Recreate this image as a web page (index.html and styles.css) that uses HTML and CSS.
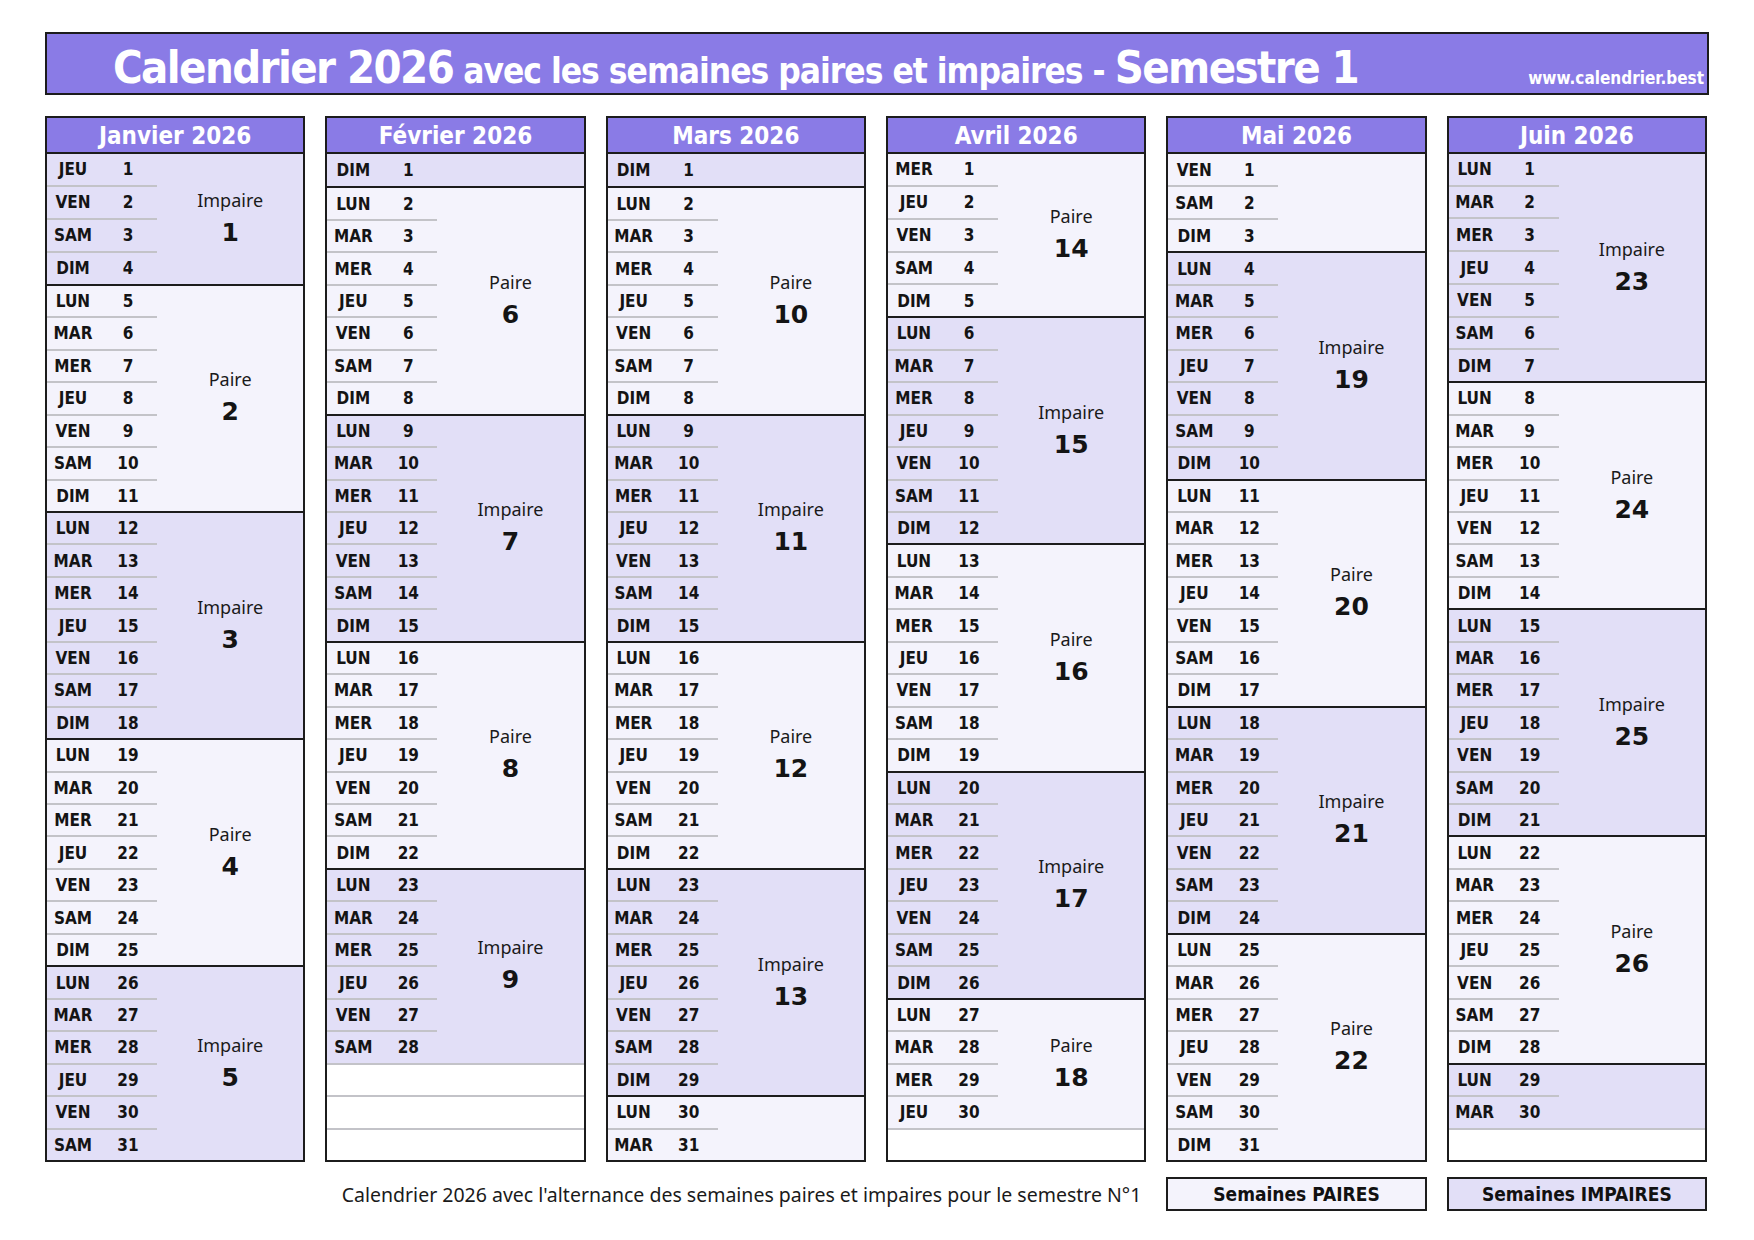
FILE: index.html
```html
<!DOCTYPE html>
<html lang="fr">
<head>
<meta charset="utf-8">
<title>Calendrier 2026 - Semestre 1</title>
<link rel="stylesheet" href="styles.css">
</head>
<body>
<div class="page">
  <header class="banner">
    <h1 class="title"><span class="big">Calendrier 2026</span> <span class="small">avec les semaines paires et impaires -</span> <span class="big">Semestre 1</span></h1>
    <div class="site">www.calendrier.best</div>
  </header>

  <div class="months">
    <!-- Janvier -->
    <section class="month">
      <h2 class="mh">Janvier 2026</h2>
      <div class="wb odd r4">
        <div class="days">
          <div class="d"><span class="dn">JEU</span><span class="dd">1</span></div>
          <div class="d"><span class="dn">VEN</span><span class="dd">2</span></div>
          <div class="d"><span class="dn">SAM</span><span class="dd">3</span></div>
          <div class="d"><span class="dn">DIM</span><span class="dd">4</span></div>
        </div>
        <div class="wk"><span class="wl">Impaire</span><span class="wn">1</span></div>
      </div>
      <div class="wb even r7">
        <div class="days">
          <div class="d"><span class="dn">LUN</span><span class="dd">5</span></div>
          <div class="d"><span class="dn">MAR</span><span class="dd">6</span></div>
          <div class="d"><span class="dn">MER</span><span class="dd">7</span></div>
          <div class="d"><span class="dn">JEU</span><span class="dd">8</span></div>
          <div class="d"><span class="dn">VEN</span><span class="dd">9</span></div>
          <div class="d"><span class="dn">SAM</span><span class="dd">10</span></div>
          <div class="d"><span class="dn">DIM</span><span class="dd">11</span></div>
        </div>
        <div class="wk"><span class="wl">Paire</span><span class="wn">2</span></div>
      </div>
      <div class="wb odd r7">
        <div class="days">
          <div class="d"><span class="dn">LUN</span><span class="dd">12</span></div>
          <div class="d"><span class="dn">MAR</span><span class="dd">13</span></div>
          <div class="d"><span class="dn">MER</span><span class="dd">14</span></div>
          <div class="d"><span class="dn">JEU</span><span class="dd">15</span></div>
          <div class="d"><span class="dn">VEN</span><span class="dd">16</span></div>
          <div class="d"><span class="dn">SAM</span><span class="dd">17</span></div>
          <div class="d"><span class="dn">DIM</span><span class="dd">18</span></div>
        </div>
        <div class="wk"><span class="wl">Impaire</span><span class="wn">3</span></div>
      </div>
      <div class="wb even r7">
        <div class="days">
          <div class="d"><span class="dn">LUN</span><span class="dd">19</span></div>
          <div class="d"><span class="dn">MAR</span><span class="dd">20</span></div>
          <div class="d"><span class="dn">MER</span><span class="dd">21</span></div>
          <div class="d"><span class="dn">JEU</span><span class="dd">22</span></div>
          <div class="d"><span class="dn">VEN</span><span class="dd">23</span></div>
          <div class="d"><span class="dn">SAM</span><span class="dd">24</span></div>
          <div class="d"><span class="dn">DIM</span><span class="dd">25</span></div>
        </div>
        <div class="wk"><span class="wl">Paire</span><span class="wn">4</span></div>
      </div>
      <div class="wb odd r6">
        <div class="days">
          <div class="d"><span class="dn">LUN</span><span class="dd">26</span></div>
          <div class="d"><span class="dn">MAR</span><span class="dd">27</span></div>
          <div class="d"><span class="dn">MER</span><span class="dd">28</span></div>
          <div class="d"><span class="dn">JEU</span><span class="dd">29</span></div>
          <div class="d"><span class="dn">VEN</span><span class="dd">30</span></div>
          <div class="d"><span class="dn">SAM</span><span class="dd">31</span></div>
        </div>
        <div class="wk"><span class="wl">Impaire</span><span class="wn">5</span></div>
      </div>
    </section>

    <!-- Février -->
    <section class="month">
      <h2 class="mh">Février 2026</h2>
      <div class="wb odd r1">
        <div class="days">
          <div class="d"><span class="dn">DIM</span><span class="dd">1</span></div>
        </div>
        <div class="wk"></div>
      </div>
      <div class="wb even r7">
        <div class="days">
          <div class="d"><span class="dn">LUN</span><span class="dd">2</span></div>
          <div class="d"><span class="dn">MAR</span><span class="dd">3</span></div>
          <div class="d"><span class="dn">MER</span><span class="dd">4</span></div>
          <div class="d"><span class="dn">JEU</span><span class="dd">5</span></div>
          <div class="d"><span class="dn">VEN</span><span class="dd">6</span></div>
          <div class="d"><span class="dn">SAM</span><span class="dd">7</span></div>
          <div class="d"><span class="dn">DIM</span><span class="dd">8</span></div>
        </div>
        <div class="wk"><span class="wl">Paire</span><span class="wn">6</span></div>
      </div>
      <div class="wb odd r7">
        <div class="days">
          <div class="d"><span class="dn">LUN</span><span class="dd">9</span></div>
          <div class="d"><span class="dn">MAR</span><span class="dd">10</span></div>
          <div class="d"><span class="dn">MER</span><span class="dd">11</span></div>
          <div class="d"><span class="dn">JEU</span><span class="dd">12</span></div>
          <div class="d"><span class="dn">VEN</span><span class="dd">13</span></div>
          <div class="d"><span class="dn">SAM</span><span class="dd">14</span></div>
          <div class="d"><span class="dn">DIM</span><span class="dd">15</span></div>
        </div>
        <div class="wk"><span class="wl">Impaire</span><span class="wn">7</span></div>
      </div>
      <div class="wb even r7">
        <div class="days">
          <div class="d"><span class="dn">LUN</span><span class="dd">16</span></div>
          <div class="d"><span class="dn">MAR</span><span class="dd">17</span></div>
          <div class="d"><span class="dn">MER</span><span class="dd">18</span></div>
          <div class="d"><span class="dn">JEU</span><span class="dd">19</span></div>
          <div class="d"><span class="dn">VEN</span><span class="dd">20</span></div>
          <div class="d"><span class="dn">SAM</span><span class="dd">21</span></div>
          <div class="d"><span class="dn">DIM</span><span class="dd">22</span></div>
        </div>
        <div class="wk"><span class="wl">Paire</span><span class="wn">8</span></div>
      </div>
      <div class="wb odd r6">
        <div class="days">
          <div class="d"><span class="dn">LUN</span><span class="dd">23</span></div>
          <div class="d"><span class="dn">MAR</span><span class="dd">24</span></div>
          <div class="d"><span class="dn">MER</span><span class="dd">25</span></div>
          <div class="d"><span class="dn">JEU</span><span class="dd">26</span></div>
          <div class="d"><span class="dn">VEN</span><span class="dd">27</span></div>
          <div class="d"><span class="dn">SAM</span><span class="dd">28</span></div>
        </div>
        <div class="wk"><span class="wl">Impaire</span><span class="wn">9</span></div>
      </div>
      <div class="empty"></div>
      <div class="empty"></div>
      <div class="empty"></div>
    </section>

    <!-- Mars -->
    <section class="month">
      <h2 class="mh">Mars 2026</h2>
      <div class="wb odd r1">
        <div class="days">
          <div class="d"><span class="dn">DIM</span><span class="dd">1</span></div>
        </div>
        <div class="wk"></div>
      </div>
      <div class="wb even r7">
        <div class="days">
          <div class="d"><span class="dn">LUN</span><span class="dd">2</span></div>
          <div class="d"><span class="dn">MAR</span><span class="dd">3</span></div>
          <div class="d"><span class="dn">MER</span><span class="dd">4</span></div>
          <div class="d"><span class="dn">JEU</span><span class="dd">5</span></div>
          <div class="d"><span class="dn">VEN</span><span class="dd">6</span></div>
          <div class="d"><span class="dn">SAM</span><span class="dd">7</span></div>
          <div class="d"><span class="dn">DIM</span><span class="dd">8</span></div>
        </div>
        <div class="wk"><span class="wl">Paire</span><span class="wn">10</span></div>
      </div>
      <div class="wb odd r7">
        <div class="days">
          <div class="d"><span class="dn">LUN</span><span class="dd">9</span></div>
          <div class="d"><span class="dn">MAR</span><span class="dd">10</span></div>
          <div class="d"><span class="dn">MER</span><span class="dd">11</span></div>
          <div class="d"><span class="dn">JEU</span><span class="dd">12</span></div>
          <div class="d"><span class="dn">VEN</span><span class="dd">13</span></div>
          <div class="d"><span class="dn">SAM</span><span class="dd">14</span></div>
          <div class="d"><span class="dn">DIM</span><span class="dd">15</span></div>
        </div>
        <div class="wk"><span class="wl">Impaire</span><span class="wn">11</span></div>
      </div>
      <div class="wb even r7">
        <div class="days">
          <div class="d"><span class="dn">LUN</span><span class="dd">16</span></div>
          <div class="d"><span class="dn">MAR</span><span class="dd">17</span></div>
          <div class="d"><span class="dn">MER</span><span class="dd">18</span></div>
          <div class="d"><span class="dn">JEU</span><span class="dd">19</span></div>
          <div class="d"><span class="dn">VEN</span><span class="dd">20</span></div>
          <div class="d"><span class="dn">SAM</span><span class="dd">21</span></div>
          <div class="d"><span class="dn">DIM</span><span class="dd">22</span></div>
        </div>
        <div class="wk"><span class="wl">Paire</span><span class="wn">12</span></div>
      </div>
      <div class="wb odd r7">
        <div class="days">
          <div class="d"><span class="dn">LUN</span><span class="dd">23</span></div>
          <div class="d"><span class="dn">MAR</span><span class="dd">24</span></div>
          <div class="d"><span class="dn">MER</span><span class="dd">25</span></div>
          <div class="d"><span class="dn">JEU</span><span class="dd">26</span></div>
          <div class="d"><span class="dn">VEN</span><span class="dd">27</span></div>
          <div class="d"><span class="dn">SAM</span><span class="dd">28</span></div>
          <div class="d"><span class="dn">DIM</span><span class="dd">29</span></div>
        </div>
        <div class="wk"><span class="wl">Impaire</span><span class="wn">13</span></div>
      </div>
      <div class="wb even r2">
        <div class="days">
          <div class="d"><span class="dn">LUN</span><span class="dd">30</span></div>
          <div class="d"><span class="dn">MAR</span><span class="dd">31</span></div>
        </div>
        <div class="wk"></div>
      </div>
    </section>

    <!-- Avril -->
    <section class="month">
      <h2 class="mh">Avril 2026</h2>
      <div class="wb even r5">
        <div class="days">
          <div class="d"><span class="dn">MER</span><span class="dd">1</span></div>
          <div class="d"><span class="dn">JEU</span><span class="dd">2</span></div>
          <div class="d"><span class="dn">VEN</span><span class="dd">3</span></div>
          <div class="d"><span class="dn">SAM</span><span class="dd">4</span></div>
          <div class="d"><span class="dn">DIM</span><span class="dd">5</span></div>
        </div>
        <div class="wk"><span class="wl">Paire</span><span class="wn">14</span></div>
      </div>
      <div class="wb odd r7">
        <div class="days">
          <div class="d"><span class="dn">LUN</span><span class="dd">6</span></div>
          <div class="d"><span class="dn">MAR</span><span class="dd">7</span></div>
          <div class="d"><span class="dn">MER</span><span class="dd">8</span></div>
          <div class="d"><span class="dn">JEU</span><span class="dd">9</span></div>
          <div class="d"><span class="dn">VEN</span><span class="dd">10</span></div>
          <div class="d"><span class="dn">SAM</span><span class="dd">11</span></div>
          <div class="d"><span class="dn">DIM</span><span class="dd">12</span></div>
        </div>
        <div class="wk"><span class="wl">Impaire</span><span class="wn">15</span></div>
      </div>
      <div class="wb even r7">
        <div class="days">
          <div class="d"><span class="dn">LUN</span><span class="dd">13</span></div>
          <div class="d"><span class="dn">MAR</span><span class="dd">14</span></div>
          <div class="d"><span class="dn">MER</span><span class="dd">15</span></div>
          <div class="d"><span class="dn">JEU</span><span class="dd">16</span></div>
          <div class="d"><span class="dn">VEN</span><span class="dd">17</span></div>
          <div class="d"><span class="dn">SAM</span><span class="dd">18</span></div>
          <div class="d"><span class="dn">DIM</span><span class="dd">19</span></div>
        </div>
        <div class="wk"><span class="wl">Paire</span><span class="wn">16</span></div>
      </div>
      <div class="wb odd r7">
        <div class="days">
          <div class="d"><span class="dn">LUN</span><span class="dd">20</span></div>
          <div class="d"><span class="dn">MAR</span><span class="dd">21</span></div>
          <div class="d"><span class="dn">MER</span><span class="dd">22</span></div>
          <div class="d"><span class="dn">JEU</span><span class="dd">23</span></div>
          <div class="d"><span class="dn">VEN</span><span class="dd">24</span></div>
          <div class="d"><span class="dn">SAM</span><span class="dd">25</span></div>
          <div class="d"><span class="dn">DIM</span><span class="dd">26</span></div>
        </div>
        <div class="wk"><span class="wl">Impaire</span><span class="wn">17</span></div>
      </div>
      <div class="wb even r4">
        <div class="days">
          <div class="d"><span class="dn">LUN</span><span class="dd">27</span></div>
          <div class="d"><span class="dn">MAR</span><span class="dd">28</span></div>
          <div class="d"><span class="dn">MER</span><span class="dd">29</span></div>
          <div class="d"><span class="dn">JEU</span><span class="dd">30</span></div>
        </div>
        <div class="wk"><span class="wl">Paire</span><span class="wn">18</span></div>
      </div>
      <div class="empty"></div>
    </section>

    <!-- Mai -->
    <section class="month">
      <h2 class="mh">Mai 2026</h2>
      <div class="wb even r3">
        <div class="days">
          <div class="d"><span class="dn">VEN</span><span class="dd">1</span></div>
          <div class="d"><span class="dn">SAM</span><span class="dd">2</span></div>
          <div class="d"><span class="dn">DIM</span><span class="dd">3</span></div>
        </div>
        <div class="wk"></div>
      </div>
      <div class="wb odd r7">
        <div class="days">
          <div class="d"><span class="dn">LUN</span><span class="dd">4</span></div>
          <div class="d"><span class="dn">MAR</span><span class="dd">5</span></div>
          <div class="d"><span class="dn">MER</span><span class="dd">6</span></div>
          <div class="d"><span class="dn">JEU</span><span class="dd">7</span></div>
          <div class="d"><span class="dn">VEN</span><span class="dd">8</span></div>
          <div class="d"><span class="dn">SAM</span><span class="dd">9</span></div>
          <div class="d"><span class="dn">DIM</span><span class="dd">10</span></div>
        </div>
        <div class="wk"><span class="wl">Impaire</span><span class="wn">19</span></div>
      </div>
      <div class="wb even r7">
        <div class="days">
          <div class="d"><span class="dn">LUN</span><span class="dd">11</span></div>
          <div class="d"><span class="dn">MAR</span><span class="dd">12</span></div>
          <div class="d"><span class="dn">MER</span><span class="dd">13</span></div>
          <div class="d"><span class="dn">JEU</span><span class="dd">14</span></div>
          <div class="d"><span class="dn">VEN</span><span class="dd">15</span></div>
          <div class="d"><span class="dn">SAM</span><span class="dd">16</span></div>
          <div class="d"><span class="dn">DIM</span><span class="dd">17</span></div>
        </div>
        <div class="wk"><span class="wl">Paire</span><span class="wn">20</span></div>
      </div>
      <div class="wb odd r7">
        <div class="days">
          <div class="d"><span class="dn">LUN</span><span class="dd">18</span></div>
          <div class="d"><span class="dn">MAR</span><span class="dd">19</span></div>
          <div class="d"><span class="dn">MER</span><span class="dd">20</span></div>
          <div class="d"><span class="dn">JEU</span><span class="dd">21</span></div>
          <div class="d"><span class="dn">VEN</span><span class="dd">22</span></div>
          <div class="d"><span class="dn">SAM</span><span class="dd">23</span></div>
          <div class="d"><span class="dn">DIM</span><span class="dd">24</span></div>
        </div>
        <div class="wk"><span class="wl">Impaire</span><span class="wn">21</span></div>
      </div>
      <div class="wb even r7">
        <div class="days">
          <div class="d"><span class="dn">LUN</span><span class="dd">25</span></div>
          <div class="d"><span class="dn">MAR</span><span class="dd">26</span></div>
          <div class="d"><span class="dn">MER</span><span class="dd">27</span></div>
          <div class="d"><span class="dn">JEU</span><span class="dd">28</span></div>
          <div class="d"><span class="dn">VEN</span><span class="dd">29</span></div>
          <div class="d"><span class="dn">SAM</span><span class="dd">30</span></div>
          <div class="d"><span class="dn">DIM</span><span class="dd">31</span></div>
        </div>
        <div class="wk"><span class="wl">Paire</span><span class="wn">22</span></div>
      </div>
    </section>

    <!-- Juin -->
    <section class="month">
      <h2 class="mh">Juin 2026</h2>
      <div class="wb odd r7">
        <div class="days">
          <div class="d"><span class="dn">LUN</span><span class="dd">1</span></div>
          <div class="d"><span class="dn">MAR</span><span class="dd">2</span></div>
          <div class="d"><span class="dn">MER</span><span class="dd">3</span></div>
          <div class="d"><span class="dn">JEU</span><span class="dd">4</span></div>
          <div class="d"><span class="dn">VEN</span><span class="dd">5</span></div>
          <div class="d"><span class="dn">SAM</span><span class="dd">6</span></div>
          <div class="d"><span class="dn">DIM</span><span class="dd">7</span></div>
        </div>
        <div class="wk"><span class="wl">Impaire</span><span class="wn">23</span></div>
      </div>
      <div class="wb even r7">
        <div class="days">
          <div class="d"><span class="dn">LUN</span><span class="dd">8</span></div>
          <div class="d"><span class="dn">MAR</span><span class="dd">9</span></div>
          <div class="d"><span class="dn">MER</span><span class="dd">10</span></div>
          <div class="d"><span class="dn">JEU</span><span class="dd">11</span></div>
          <div class="d"><span class="dn">VEN</span><span class="dd">12</span></div>
          <div class="d"><span class="dn">SAM</span><span class="dd">13</span></div>
          <div class="d"><span class="dn">DIM</span><span class="dd">14</span></div>
        </div>
        <div class="wk"><span class="wl">Paire</span><span class="wn">24</span></div>
      </div>
      <div class="wb odd r7">
        <div class="days">
          <div class="d"><span class="dn">LUN</span><span class="dd">15</span></div>
          <div class="d"><span class="dn">MAR</span><span class="dd">16</span></div>
          <div class="d"><span class="dn">MER</span><span class="dd">17</span></div>
          <div class="d"><span class="dn">JEU</span><span class="dd">18</span></div>
          <div class="d"><span class="dn">VEN</span><span class="dd">19</span></div>
          <div class="d"><span class="dn">SAM</span><span class="dd">20</span></div>
          <div class="d"><span class="dn">DIM</span><span class="dd">21</span></div>
        </div>
        <div class="wk"><span class="wl">Impaire</span><span class="wn">25</span></div>
      </div>
      <div class="wb even r7">
        <div class="days">
          <div class="d"><span class="dn">LUN</span><span class="dd">22</span></div>
          <div class="d"><span class="dn">MAR</span><span class="dd">23</span></div>
          <div class="d"><span class="dn">MER</span><span class="dd">24</span></div>
          <div class="d"><span class="dn">JEU</span><span class="dd">25</span></div>
          <div class="d"><span class="dn">VEN</span><span class="dd">26</span></div>
          <div class="d"><span class="dn">SAM</span><span class="dd">27</span></div>
          <div class="d"><span class="dn">DIM</span><span class="dd">28</span></div>
        </div>
        <div class="wk"><span class="wl">Paire</span><span class="wn">26</span></div>
      </div>
      <div class="wb odd r2">
        <div class="days">
          <div class="d"><span class="dn">LUN</span><span class="dd">29</span></div>
          <div class="d"><span class="dn">MAR</span><span class="dd">30</span></div>
        </div>
        <div class="wk"></div>
      </div>
      <div class="empty"></div>
    </section>
  </div>

  <footer class="foot">
    <p class="note">Calendrier 2026 avec l'alternance des semaines paires et impaires pour le semestre N°1</p>
    <div class="leg even">Semaines PAIRES</div>
    <div class="leg odd">Semaines IMPAIRES</div>
  </footer>
</div>
</body>
</html>
```

FILE: styles.css
```css
* { box-sizing: border-box; }

body {
  margin: 0;
  background: #ffffff;
  color: #111111;
}

.page {
  width: 1709px;
  padding: 32px 0 0 45px;
}

/* ---------- banner ---------- */
.banner {
  height: 63px;
  border: 2px solid #1c1c1c;
  background: #8a7be6;
  color: #ffffff;
  display: flex;
  align-items: flex-end;
  padding: 0 3px 3px 66px;
  font-family: "DejaVu Sans Condensed", "DejaVu Sans", sans-serif;
  font-weight: bold;
}

.title {
  margin: 0;
  line-height: 1;
  white-space: nowrap;
  font-weight: bold;
}

.big {
  font-size: 45px;
  letter-spacing: -1.6px;
}

.small {
  font-size: 35px;
  letter-spacing: -1px;
}

.site {
  margin-left: auto;
  font-size: 17px;
  line-height: 1;
  padding-bottom: 3px;
}

/* ---------- months ---------- */
.months {
  display: grid;
  grid-template-columns: repeat(6, 1fr);
  column-gap: 20px;
  width: 1662px;
  margin-top: 21px;
}

.month {
  height: 1046px;
  border: 2px solid #1c1c1c;
  display: grid;
  grid-template-rows: 36px repeat(31, 1fr);
  background: #ffffff;
}

.mh {
  margin: 0;
  background: #8a7be6;
  color: #ffffff;
  border-bottom: 2px solid #1c1c1c;
  text-align: center;
  font-family: "DejaVu Sans Condensed", "DejaVu Sans", sans-serif;
  font-weight: bold;
  font-size: 24px;
  line-height: 34px;
  padding-top: 1px;
}

.wb {
  display: grid;
  grid-template-columns: 110px 1fr;
  border-top: 2px solid #1c1c1c;
}

.mh + .wb { border-top: 0; }

.r1 { grid-row: span 1; }
.r2 { grid-row: span 2; }
.r3 { grid-row: span 3; }
.r4 { grid-row: span 4; }
.r5 { grid-row: span 5; }
.r6 { grid-row: span 6; }
.r7 { grid-row: span 7; }

.odd { background: #e2dff7; }
.even { background: #f4f3fc; }

.days {
  display: flex;
  flex-direction: column;
}

.d {
  flex: 1 1 0;
  display: flex;
  align-items: center;
  border-top: 2px solid #c3c3c8;
  font-family: "DejaVu Sans Condensed", "DejaVu Sans", sans-serif;
  font-weight: bold;
  font-size: 17px;
  color: #141414;
}

.d:first-child { border-top: 0; }

.dn {
  width: 52px;
  text-align: center;
}

.dd {
  width: 58px;
  text-align: center;
}

.wk {
  display: flex;
  flex-direction: column;
  align-items: center;
  justify-content: center;
  padding-bottom: 2px;
}

.wl {
  font-family: "Noto Sans", "Liberation Sans", sans-serif;
  font-size: 18px;
  line-height: 24px;
  color: #1a1a1a;
}

.wn {
  margin-top: 6px;
  font-family: "DejaVu Sans", sans-serif;
  font-weight: bold;
  font-size: 25px;
  line-height: 30px;
  color: #141414;
}

.empty {
  border-top: 2px solid #c3c3c8;
  background: #ffffff;
}

/* ---------- footer ---------- */
.foot {
  display: grid;
  grid-template-columns: repeat(6, 1fr);
  column-gap: 20px;
  width: 1662px;
  margin-top: 15px;
  height: 34px;
}

.note {
  grid-column: 1 / 5;
  margin: 0;
  align-self: center;
  text-align: right;
  padding-right: 5px;
  white-space: nowrap;
  font-family: "Noto Sans", "Liberation Sans", sans-serif;
  font-size: 19.5px;
  color: #1a1a1a;
}

.leg {
  border: 2px solid #1c1c1c;
  text-align: center;
  font-family: "DejaVu Sans Condensed", "DejaVu Sans", sans-serif;
  font-weight: bold;
  font-size: 19px;
  line-height: 30px;
  color: #111111;
}
```
